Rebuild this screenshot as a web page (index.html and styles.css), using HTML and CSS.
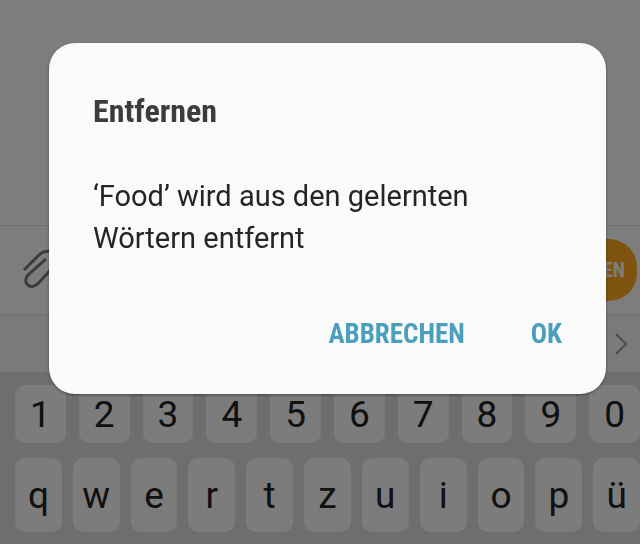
FILE: index.html
```html
<!DOCTYPE html>
<html lang="de">
<head>
  <meta charset="UTF-8" />
  <meta name="viewport" content="width=device-width, initial-scale=1.0">
  <title>Entfernen</title>
  <link rel="stylesheet" href="styles.css">
</head>
<body>
  <div class="screen">
    <div class="messages"></div>

    <div class="composer">
      <button class="attach" type="button" aria-label="Anhang">
        <svg viewBox="0 0 44 44"><path d="M2 22L17 7C20 4 24 2.500 29 3.500C36 5 38 12 33 17L17 34.500C13 38.500 9 39.500 6 37C3 34.500 3 30.500 6 27L24 11"/></svg>
      </button>
      <button class="send" type="button" aria-label="Senden">EN</button>
    </div>

    <div class="suggestions">
      <button class="more" type="button" aria-label="Mehr">
        <svg viewBox="0 0 14 24"><path d="M2 2l10 10L2 22"/></svg>
      </button>
    </div>

    <div class="keyboard">
      <div class="key-row numbers">
        <button class="key">1</button>
        <button class="key">2</button>
        <button class="key">3</button>
        <button class="key">4</button>
        <button class="key">5</button>
        <button class="key">6</button>
        <button class="key">7</button>
        <button class="key">8</button>
        <button class="key">9</button>
        <button class="key">0</button>
      </div>
      <div class="key-row letters">
        <button class="key">q</button>
        <button class="key">w</button>
        <button class="key">e</button>
        <button class="key">r</button>
        <button class="key">t</button>
        <button class="key">z</button>
        <button class="key">u</button>
        <button class="key">i</button>
        <button class="key">o</button>
        <button class="key">p</button>
        <button class="key">ü</button>
      </div>
    </div>
  </div>

  <div class="overlay">
    <div class="dialog" role="dialog" aria-labelledby="dialog-title">
      <h1 class="title" id="dialog-title">Entfernen</h1>
      <p class="text">‘Food’ wird aus den gelernten Wörtern entfernt</p>
      <div class="actions">
        <button class="action" type="button">ABBRECHEN</button>
        <button class="action" type="button">OK</button>
      </div>
    </div>
  </div>
</body>
</html>
```

FILE: styles.css
```css
html, body {
  height: 100%;
  margin: 0;
  font-family: Roboto, sans-serif;
  background-color: #fafafa;
  overflow: hidden;
}

button {
  padding: 0;
  border: 0;
  background: none;
  font-family: inherit;
}

svg {
  display: block;
  fill: none;
  stroke: currentColor;
}

.screen {
  display: flex;
  flex-direction: column;
  min-height: 100%;
}

.messages {
  flex: 1;
}

.composer {
  display: flex;
  align-items: center;
  justify-content: space-between;
  height: 88px;
  padding: 0 3px 0 22px;
  border-top: 1px solid #e0e0e0;
  border-bottom: 1px solid #e0e0e0;
}

.attach svg {
  width: 44px;
  height: 44px;
  color: #777;
  stroke-width: 3;
}

.send {
  width: 100px;
  height: 62px;
  padding-right: 12px;
  border-radius: 28px;
  background-color: #ffa820;
  color: #fafafa;
  font-family: "Roboto Condensed", Roboto, sans-serif;
  font-size: 20px;
  font-weight: 700;
  text-align: right;
}

.suggestions {
  display: flex;
  align-items: center;
  justify-content: flex-end;
  height: 57px;
  padding-right: 12px;
  background-color: #f4f4f4;
}

.more svg {
  width: 14px;
  height: 24px;
  color: #999;
  stroke-width: 2;
}

.keyboard {
  padding: 13px 0 12px 15px;
  background-color: #dadce0;
}

.key-row {
  display: grid;
  grid-auto-flow: column;
  grid-auto-columns: 1fr;
}

.numbers {
  gap: 13px;
  height: 58px;
  margin-bottom: 15px;
}

.letters {
  gap: 11px;
  height: 74px;
}

.key {
  border-radius: 10px;
  background-color: #f8f8f8;
  color: #222;
  font-size: 37px;
}

/* dimmed layer with the dialog on top */
.overlay {
  position: fixed;
  inset: 0;
  padding: 43px 34px 0 49px;
  background-color: rgba(0, 0, 0, 0.5);
}

.dialog {
  padding: 44px 44px 42px;
  border-radius: 26px;
  background-color: #fafafa;
  box-shadow: 0 1px 3px rgba(0, 0, 0, 0.4);
}

.title {
  margin: 0 0 40px;
  color: #3c3c3c;
  font-family: "Roboto Condensed", Roboto, sans-serif;
  font-size: 32px;
  font-weight: 700;
  line-height: 48px;
}

.text {
  margin: 0 0 57px;
  color: #252525;
  font-size: 29px;
  line-height: 42px;
}

.actions {
  display: flex;
  justify-content: flex-end;
  gap: 66px;
}

.action {
  color: #4a9fbd;
  font-family: "Roboto Condensed", Roboto, sans-serif;
  font-size: 27px;
  font-weight: 700;
  line-height: 36px;
}
```
